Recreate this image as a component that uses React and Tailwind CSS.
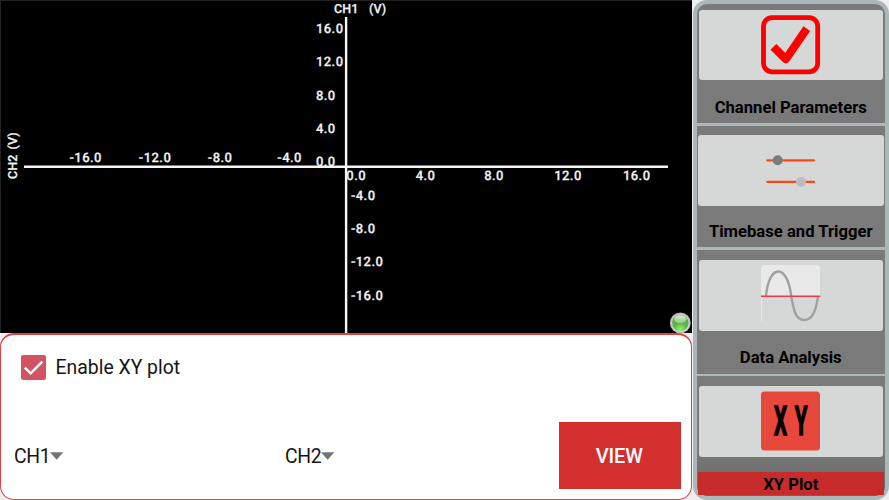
const TICKS = [
  [315.9, 33.1, '16.0'], [315.9, 66.3, '12.0'], [315.9, 99.7, '8.0'], [315.9, 133, '4.0'], [315.9, 166.1, '0.0'],
  [350.9, 199.9, '-4.0'], [350.9, 233.1, '-8.0'], [350.9, 266.3, '-12.0'], [350.9, 299.6, '-16.0'],
  [69.5, 161.6, '-16.0'], [138.8, 161.6, '-12.0'], [207.8, 161.6, '-8.0'], [277.3, 161.6, '-4.0'],
  [346.3, 180.4, '0.0'], [415.7, 180.4, '4.0'], [484.2, 180.4, '8.0'], [554.2, 180.4, '12.0'], [622.9, 180.4, '16.0'],
];

function Plot() {
  return (
    <div className="relative h-[333px] w-[692px] shrink-0 border-t border-l border-[#222] bg-black">
      <svg className="absolute -left-px -top-px" width="692" height="333" viewBox="0 0 692 333">
        <g fill="#f2f2f2" stroke="#f2f2f2" strokeWidth=".25" textRendering="geometricPrecision" fontFamily="Roboto, sans-serif" fontSize="13" fontWeight="500" letterSpacing="0.45">
          {TICKS.map(([x, y, label]) => (
            <text key={`${x}-${y}`} x={x} y={y}>{label}</text>
          ))}
          <text x="334" y="13.3" fontSize="12.5" letterSpacing="0.1">CH1</text>
          <text x="369" y="13.3" fontSize="12.5" letterSpacing="0.1">(V)</text>
          <g transform="translate(17.4 179) rotate(-90)" fontSize="12.5" letterSpacing="0.1">
            <text x="0" y="0">CH2</text>
            <text x="29.5" y="0">(V)</text>
          </g>
        </g>
        <path d="M24 166.8H668M346.1 17V333" stroke="#f6f6f6" strokeWidth="2.4" />
      </svg>
      <svg className="absolute left-[668px] top-[311px]" width="22" height="22" viewBox="0 0 22 22">
        <defs>
          <radialGradient id="led" cx=".5" cy=".9" r=".75">
            <stop offset="0" stopColor="#8cf66b" />
            <stop offset=".55" stopColor="#55b83e" />
            <stop offset="1" stopColor="#62a956" />
          </radialGradient>
          <linearGradient id="gloss" x1="0" y1="0" x2="0" y2="1">
            <stop offset="0" stopColor="#d9ecd6" />
            <stop offset="1" stopColor="#8cc77f" />
          </linearGradient>
        </defs>
        <circle cx="11.3" cy="10.9" r="10.4" fill="#b9b6b9" />
        <circle cx="11.3" cy="10.9" r="9.2" fill="#d5d2d5" />
        <circle cx="11.3" cy="10.9" r="8.2" fill="url(#led)" />
        <ellipse cx="11.3" cy="7.2" rx="6" ry="4" fill="url(#gloss)" />
      </svg>
    </div>
  );
}

function Spinner({ label }) {
  return (
    <button className="flex items-center pt-[2px] text-[19.4px] leading-6 tracking-[-0.3px] text-[#151515]">
      {label}
      <svg className="-mt-[2px]" width="14" height="8" viewBox="0 0 14 8">
        <path d="M0 .3H13.3L6.65 7.8Z" fill="#747474" />
      </svg>
    </button>
  );
}

function Controls() {
  return (
    <div className="h-[167px] bg-[#eeeeee]">
      <div className="flex h-[167px] w-[692px] flex-col rounded-[14px] border border-t-2 border-[#dc4444] bg-white pt-[19px] pr-[10px] pl-[13px]">
        <label className="flex h-[27px] items-center pl-[7px] text-[19.4px] leading-6 text-[#151515]">
          <svg width="25" height="25" viewBox="0 0 25 25">
            <rect width="25" height="25" rx="2.2" fill="#d25362" />
            <path d="M3.8 12.7L9.7 18.3L21.3 6.7" fill="none" stroke="white" strokeWidth="2.5" />
          </svg>
          <span className="ml-[9.5px] whitespace-nowrap">Enable XY plot</span>
        </label>
        <div className="mt-[41px] flex h-[67px] items-center">
          <div className="w-[271px]"><Spinner label="CH1" /></div>
          <div className="flex-1"><Spinner label="CH2" /></div>
          <button className="h-[67px] w-[122.5px] bg-[#d32f2f] pr-px text-[20px] font-medium tracking-[-0.1px] text-white">VIEW</button>
        </div>
      </div>
    </div>
  );
}

function CheckIcon() {
  return (
    <svg width="60" height="60" viewBox="0 0 60 60">
      <rect x="2.5" y="2.6" width="54.2" height="54.2" rx="8.5" fill="none" stroke="#fd0000" strokeWidth="4.8" />
      <path d="M12.4 31.8L24.8 44.2L45.8 13.6" fill="none" stroke="#fd0000" strokeWidth="8.2" strokeLinejoin="round" />
    </svg>
  );
}

function SlidersIcon() {
  return (
    <svg width="60" height="60" viewBox="0 0 60 60">
      <path d="M6.3 20.3H53M6.3 41.9H53" stroke="#ff4518" strokeWidth="2.2" strokeLinecap="round" />
      <circle cx="16.7" cy="20.3" r="5" fill="#7c7c7c" />
      <circle cx="40" cy="41.9" r="5" fill="#bdbdbd" />
    </svg>
  );
}

function WaveIcon() {
  return (
    <svg width="60" height="60" viewBox="0 0 60 60">
      <path d="M0 31V4Q0 0 4 0H55Q59 0 59 4V31H1V56H0Z" fill="#e9e9e9" />
      <path d="M5 31C8 -1.5 26 -1.5 30 29.8C33 49 36 55 43.5 55C50 55 55 48 57 31.2" fill="none" stroke="#a0a0a0" strokeWidth="2.4" />
      <path d="M0 31.3H59.3" stroke="#ee3856" strokeWidth="1.6" />
    </svg>
  );
}

function XYIcon() {
  return (
    <svg width="60" height="60" viewBox="0 0 60 60">
      <rect y=".6" width="59" height="59" rx="3.5" fill="#e8483c" />
      <g fill="black" stroke="black" strokeWidth="1.5" fontFamily="Roboto, sans-serif" fontWeight="700" fontSize="41" textAnchor="middle">
        <text transform="translate(19.4 43.6) scale(.5 1)">X</text>
        <text transform="translate(40.2 43.6) scale(.5 1)">Y</text>
      </g>
    </svg>
  );
}

function Tile({ children, wide }) {
  return (
    <div className={`flex h-[70.5px] shrink-0 items-center justify-center rounded-[3px] bg-[#d6d8d7] ${wide ? 'mx-[1px]' : 'mx-[2px]'}`}>
      {children}
    </div>
  );
}

function Label({ children }) {
  return <div className="text-center text-[16.65px] leading-5 font-bold whitespace-nowrap text-black">{children}</div>;
}

function Sidebar() {
  return (
    <nav className="flex h-[500px] flex-1 bg-[#eeeeee] pl-[0.5px]">
      <div className="flex flex-1 flex-col rounded-[14px] border-4 border-[#abb8ba] bg-[#7a7a7a]">
        <section className="flex h-[122px] shrink-0 flex-col border-b-[3px] border-[#abb8ba] pt-[5.5px]">
          <Tile><CheckIcon /></Tile>
          <div className="mt-[18px]"><Label>Channel Parameters</Label></div>
        </section>
        <section className="flex h-[124px] shrink-0 flex-col border-b-[3px] border-[#abb8ba] pt-[9px]">
          <Tile wide><SlidersIcon /></Tile>
          <div className="mt-[16.5px]"><Label>Timebase and Trigger</Label></div>
        </section>
        <section className="flex h-[126px] shrink-0 flex-col border-b-2 border-[#abb8ba] pt-[10px]">
          <Tile><WaveIcon /></Tile>
          <div className="mt-[17.5px]"><Label>Data Analysis</Label></div>
        </section>
        <section className="flex flex-1 flex-col rounded-b-[10px] bg-linear-to-b from-[#7a7a7a] from-60% to-[#666666] pt-[10px]">
          <Tile><XYIcon /></Tile>
          <div className="mx-px mt-[15.5px] h-[22.5px] bg-[#c62c2c] pt-[2.5px]"><Label>XY Plot</Label></div>
        </section>
      </div>
    </nav>
  );
}

export default function App() {
  return (
    <div className="flex h-[500px] w-[889px] overflow-hidden bg-[#eeeeee] font-['Roboto',sans-serif]">
      <main className="flex w-[692px] shrink-0 flex-col">
        <Plot />
        <Controls />
      </main>
      <Sidebar />
    </div>
  );
}
